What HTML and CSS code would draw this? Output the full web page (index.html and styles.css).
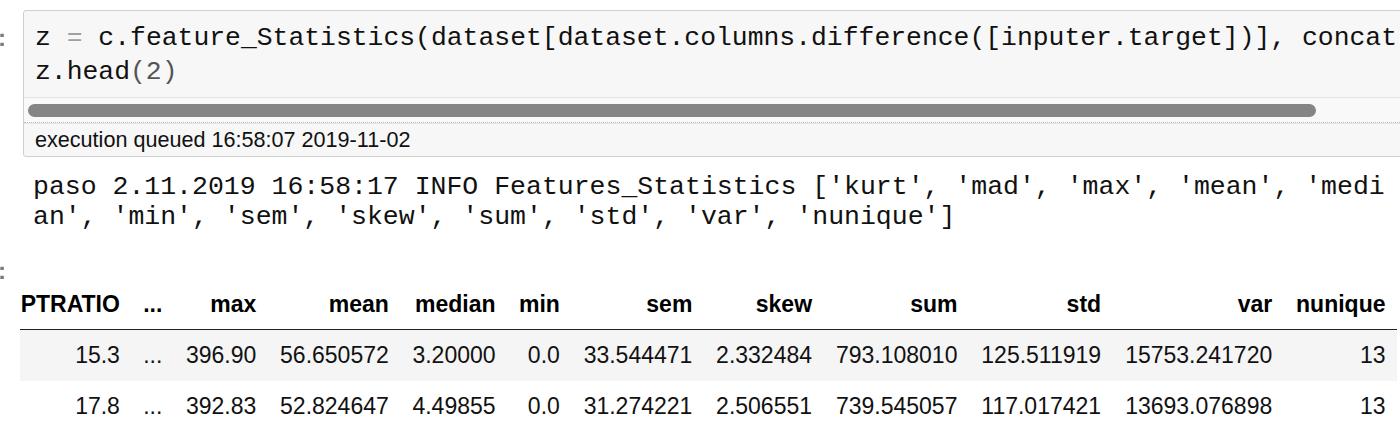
FILE: index.html
```html
<!DOCTYPE html>
<html>
<head>
<meta charset="utf-8">
<link rel="stylesheet" href="styles.css">
</head>
<body>
<div class="cell">
  <div class="prompt in-prompt">:</div>
  <div class="input">
    <pre class="code">z <span class="op">=</span> c.feature_Statistics(dataset[dataset.columns.difference([inputer.target])], concat
z.head<span class="num">(2)</span></pre>
    <div class="hscroll"><div class="thumb"></div></div>
    <div class="exec">execution queued 16:58:07 2019-11-02</div>
  </div>
</div>
<pre class="stream">paso 2.11.2019 16:58:17 INFO Features_Statistics ['kurt', 'mad', 'max', 'mean', 'medi
an', 'min', 'sem', 'skew', 'sum', 'std', 'var', 'nunique']</pre>
<div class="cell out-cell">
  <div class="prompt out-prompt">:</div>
  <table class="df">
    <thead>
      <tr><th class="first">PTRATIO</th><th>...</th><th>max</th><th>mean</th><th>median</th><th>min</th><th>sem</th><th>skew</th><th>sum</th><th>std</th><th>var</th><th>nunique</th></tr>
    </thead>
    <tbody>
      <tr class="odd"><td class="first">15.3</td><td>...</td><td>396.90</td><td>56.650572</td><td>3.20000</td><td>0.0</td><td>33.544471</td><td>2.332484</td><td>793.108010</td><td>125.511919</td><td>15753.241720</td><td>13</td></tr>
      <tr><td class="first">17.8</td><td>...</td><td>392.83</td><td>52.824647</td><td>4.49855</td><td>0.0</td><td>31.274221</td><td>2.506551</td><td>739.545057</td><td>117.017421</td><td>13693.076898</td><td>13</td></tr>
    </tbody>
  </table>
</div>
</body>
</html>
```
FILE: styles.css
```css
html, body {
  margin: 0;
  padding: 0;
  background: #ffffff;
  overflow: hidden;
  width: 1400px;
  height: 438px;
}

.cell {
  display: flex;
  align-items: flex-start;
}

.prompt {
  width: 21px;
  flex: 0 0 21px;
  margin-left: -2px;
  font-family: "Liberation Sans", Arial, sans-serif;
  font-weight: bold;
  font-size: 24px;
  color: #7a7a7a;
}

.in-prompt {
  padding-top: 21px;
  line-height: 34px;
}

.input {
  margin-top: 10px;
  flex: 0 0 1400px;
  border: 1px solid #cfcfcf;
  border-radius: 3px;
  background: #f7f7f7;
  margin-left: 4px;
}

.code {
  margin: 0;
  padding: 10px 0 8px 11px;
  font-family: "Liberation Mono", "Courier New", monospace;
  font-size: 26.4px;
  line-height: 34px;
  color: #111;
  white-space: pre;
}

.op {
  color: #a0a0a0;
}

.num {
  color: #555;
}

.hscroll {
  height: 24px;
  border-top: 1px solid #e4e4e4;
  border-bottom: 1px dotted #bdbdbd;
  background: #f9f9f9;
  display: flex;
  align-items: center;
}

.thumb {
  margin-left: 4px;
  width: 1288px;
  height: 13px;
  border-radius: 7px;
  background: #858585;
}

.exec {
  height: 32px;
  line-height: 32px;
  padding-left: 11px;
  font-family: "Liberation Sans", Arial, sans-serif;
  font-size: 21.6px;
  color: #111;
  border-top: 1px solid #e6e6e6;
}

.stream {
  margin: 15px 0 0 33px;
  font-family: "Liberation Mono", "Courier New", monospace;
  font-size: 26.5px;
  line-height: 30px;
  color: #111;
  white-space: pre;
}

.out-cell {
  margin-top: 27px;
}

.out-prompt {
  line-height: 24px;
  padding-top: 0;
}

.df {
  width: 1377px;
  margin-top: 20px;
  margin-left: 1px;
  border-collapse: collapse;
  font-family: "Liberation Sans", Arial, sans-serif;
  font-size: 23px;
  color: #111;
}

.df th,
.df td {
  text-align: right;
  padding: 0 11.5px;
  white-space: nowrap;
}

.df th {
  height: 50px;
  line-height: 27px;
  vertical-align: middle;
  font-weight: bold;
  color: #000;
  border-bottom: 1.5px solid #222;
}

.df td {
  height: 51px;
  line-height: 27px;
}

.df .first {
  padding-left: 0;
}

.df tr.odd td {
  background: #f5f5f5;
}
```
